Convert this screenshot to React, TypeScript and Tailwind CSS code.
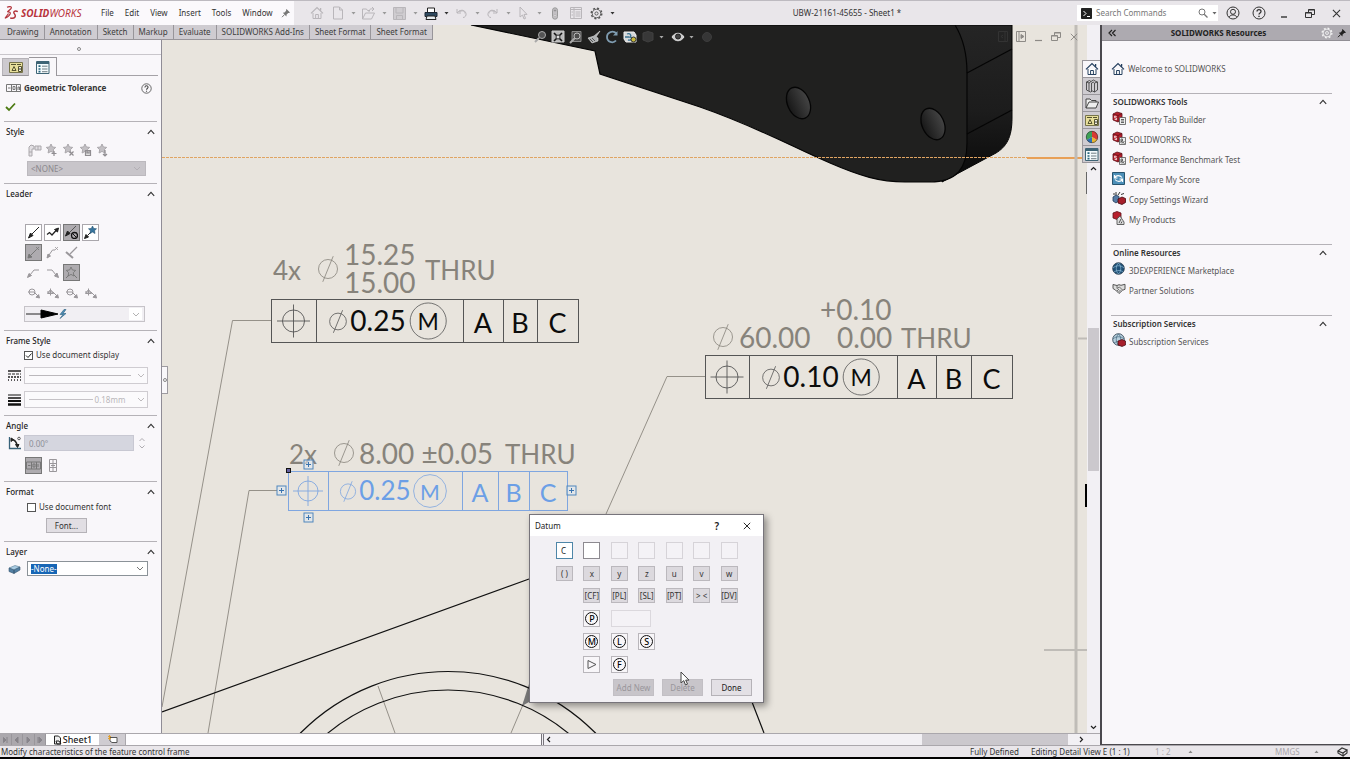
import React from "react";

type Kids = { children?: React.ReactNode };

const Svg = ({ w = 14, h = 14, vb, children, className = "" }: Kids & { w?: number; h?: number; vb?: string; className?: string }) => (
  <svg width={w} height={h} viewBox={vb ?? `0 0 ${w} ${h}`} fill="none" stroke="currentColor" strokeWidth="1" className={`shrink-0 ${className}`} aria-hidden="true">
    {children}
  </svg>
);

const Caret = ({ className = "" }: { className?: string }) => (
  <Svg w={5} h={3} className={className}>
    <path d="M0.5 0h4L2.5 2.6z" fill="currentColor" stroke="none" />
  </Svg>
);

const ChevronUp = () => (
  <Svg w={8} h={6} className="text-[#333]">
    <path d="M0.8 4.8L4 1.4l3.2 3.4" strokeWidth="1.1" />
  </Svg>
);

const ChevronDown = ({ className = "" }: { className?: string }) => (
  <Svg w={8} h={5} className={className}>
    <path d="M1 1l3 3 3-3" strokeWidth="0.9" />
  </Svg>
);

const HouseIcon = ({ className = "", fill = "#fff" }: { className?: string; fill?: string }) => (
  <Svg w={14} h={14} className={className}>
    <path d="M3 7v5.5h8V7" fill={fill} />
    <path d="M1 7.4L7 1.6l6 5.8M10.6 2v2.6" strokeWidth="1.3" />
    <path d="M5.6 12.5V8.5h2.8v4" />
  </Svg>
);

const GearIcon = ({ size = 13 }: { size?: number }) => (
  <Svg w={size} h={size} vb="0 0 14 14">
    <circle cx="7" cy="7" r="4.6" />
    <circle cx="7" cy="7" r="5.7" strokeWidth="1.5" strokeDasharray="2.2 2.27" />
    <circle cx="7" cy="7" r="1.7" />
  </Svg>
);

const PinIcon = () => (
  <Svg w={10} h={10}>
    <path d="M5.5 1l3.5 3.5-1 .6-.8-.2L5.6 6.6 5.4 8.4 1.8 4.8l1.7-.3L5.2 2.8 5 2z" fill="currentColor" stroke="none" />
    <path d="M3.6 6.5L1 9.2" />
  </Svg>
);

const Restore = () => (
  <Svg w={12} h={11}>
    <path d="M4.5 4V1.5h6v5H8" />
    <path d="M1.5 4.5h6v5h-6z" />
    <path d="M4.5 2h6M1.5 5h6" />
  </Svg>
);

const Cross = ({ size = 9 }: { size?: number }) => (
  <Svg w={size} h={size} vb="0 0 10 10">
    <path d="M1 1l8 8M9 1l-8 8" strokeWidth="1.2" />
  </Svg>
);

const DrawingIcon = () => (
  <Svg w={14} h={13}>
    <path d="M.5 1.5h13v10H.5z" fill="#e8df9a" stroke="#77744a" />
    <path d="M2 3.5h5M3 9.5l2-4 2 4zM8 3.5h4" stroke="#54522f" />
    <path d="M9.5 5.5h3v5h-3z" fill="#f4f1e0" stroke="#54522f" />
    <path d="M11 7v2" stroke="#333" />
  </Svg>
);

const ListIcon = () => (
  <Svg w={14} h={13}>
    <path d="M.5.5h12.5v12H.5z" fill="#f4fafc" stroke="#3e6475" />
    <path d="M1 2h12" stroke="#3e6475" strokeWidth="2" />
    <path d="M2.5 5.2h2M2.5 8h2M2.5 10.7h2" stroke="#27657e" strokeWidth="1.7" />
    <path d="M6 5.2h5.5M6 8h5.5M6 10.7h5.5" stroke="#6f7c82" />
  </Svg>
);

function TitleBar() {
  const menus = ["File", "Edit", "View", "Insert", "Tools", "Window"];
  return (
    <header className="flex h-[25px] shrink-0 items-stretch border-t border-[#bdbac0] bg-[#e9e6ea] text-[#333]">
      <div className="flex w-[294px] items-center bg-[#fbf9fc]">
        <Svg w={15} h={14} className="ml-1 text-[#b3343c]">
          <path d="M3 1.2C6 0 8.8.6 6.6 3L3.3 6M3.3 6C8 5.3 7 9.5 1 12.3L4.5 7.5" strokeWidth="1.2" />
          <path d="M13.8 5.6C11 4.2 8.7 5.6 10.3 7.7C12.5 10.5 11 13 6.2 12" strokeWidth="1.4" />
        </Svg>
        <span className="ml-[2px] w-[76px] text-[10px] italic text-[#b8343c]">
          <b>SOLID</b>WORKS
        </span>
        <nav className="ml-1 flex items-center gap-[11px]">
          {menus.map((m) => (
            <button key={m} type="button">{m}</button>
          ))}
        </nav>
        <button type="button" aria-label="Pin menu" className="ml-2 text-[#777]"><PinIcon /></button>
      </div>
      <div className="ml-3 flex items-center text-[#b9b6ba]">
        <Tool label="Home"><HouseIcon fill="none" /></Tool>
        <Tool label="New" caret><Svg w={12} h={14}><path d="M1.5 1h6l3 3v9h-9zM7.5 1v3h3" /></Svg></Tool>
        <Tool label="Open" caret><Svg w={15} h={13}><path d="M1.5 12V2h4l1 1.5H9M1.5 12l3-6h9l-3 6zM8 5c0-3 2-3.5 4-3M11 0l2 2-2 2" /></Svg></Tool>
        <Tool label="Save" caret><Svg w={13} h={13}><path d="M.5.5h12v12H.5z" fill="#cfccd0" /><path d="M3 1v5h7V1M3.5 12.5v-4h6v4" /></Svg></Tool>
        <Tool label="Print" caret dark>
          <Svg w={14} h={13}>
            <path d="M3.5 5V1h7v4" fill="#fff" stroke="#222" />
            <path d="M1 5.5h12v4H1z" fill="#2f4a61" stroke="#1c2733" />
            <path d="M3 9h8l1 3.5H2z" fill="#e8eef2" stroke="#222" />
          </Svg>
        </Tool>
        <Tool label="Undo" caret><Svg w={13} h={12}><path d="M2 2v4h4M2 6c3-4 8-3.5 9 .5.5 2-1 4-3 4M4.5 3.5V4.5H5.5C7.5 3 10 4 10 6.5" /></Svg></Tool>
        <Tool label="Redo" caret><Svg w={13} h={12}><path d="M11 2v4H7M11 6C8 2 3 2.5 2 6.5c-.5 2 1 4 3 4M8.5 3.5V4.5H7.5C5.5 3 3 4 3 6.5" /></Svg></Tool>
        <Tool label="Select" caret><Svg w={11} h={14}><path d="M2 1v10l2.5-2 1.5 4 1.5-.6-1.5-4H9z" /></Svg></Tool>
        <Tool label="Rebuild"><Svg w={8} h={13}><rect x="1.5" y=".8" width="5" height="11.4" rx="2.5" fill="#c4c1c5" stroke="#999" /><circle cx="4" cy="3.5" r="1.2" fill="#888" /><circle cx="4" cy="8.5" r="1.2" fill="#ddd" /></Svg></Tool>
        <Tool label="File Properties"><Svg w={12} h={12}><path d="M.5.5h11v11H.5zM.5 2.5h11M4 .5v11M1.5 5h1.5M1.5 8h1.5M5.5 5h5M5.5 7h5M5.5 9h5" /></Svg></Tool>
        <Tool label="Options" caret dark><span className="text-[#555]"><GearIcon /></span></Tool>
      </div>
      <div className="flex flex-1 items-center justify-center whitespace-nowrap">UBW-21161-45655 - Sheet1 *</div>
      <label className="my-[4px] flex w-[141px] items-center bg-white">
        <Svg w={11} h={11} className="ml-[4px]">
          <path d="M.5.5h10v10H.5z" fill="#222" stroke="#222" />
          <path d="M2.5 3l2.5 2.5L2.5 8M6 8.5h3" stroke="#fff" />
        </Svg>
        <input aria-label="Search Commands" placeholder="Search Commands" className="ml-1 w-[102px] bg-transparent outline-none placeholder:text-[#777]" />
        <Svg w={10} h={10} className="text-[#777]"><circle cx="4" cy="4" r="3" /><path d="M6.2 6.2L9.5 9.5" strokeWidth="1.3" /></Svg>
        <Caret className="ml-[4px] text-[#666]" />
      </label>
      <div className="flex items-center text-[#333]">
        <button type="button" aria-label="Account" className="flex w-[30px] justify-center"><Svg w={14} h={14}><circle cx="7" cy="7" r="6" /><circle cx="7" cy="5.8" r="2.5" /><path d="M3.2 11.2c1-3 6.5-3 7.6 0" /></Svg></button>
        <button type="button" aria-label="Help" className="flex w-[22px] justify-center"><HelpMark size={14} /></button>
        <button type="button" aria-label="Minimize" className="flex w-[28px] justify-center pt-[7px]"><Svg w={8} h={2}><path d="M1 1h6" strokeWidth="1.4" /></Svg></button>
        <button type="button" aria-label="Restore" className="flex w-6 justify-center"><Restore /></button>
        <button type="button" aria-label="Close" className="flex w-[28px] justify-center"><Cross /></button>
      </div>
    </header>
  );
}

const HelpMark = ({ size = 11 }: { size?: number }) => (
  <Svg w={size} h={size} vb="0 0 14 14">
    <circle cx="7" cy="7" r="6" />
    <path d="M5 5.6C5 3 9 3 9 5.5 9 7 7 7 7 8.6" strokeWidth="1.3" />
    <path d="M7 9.8v1.3" strokeWidth="1.4" />
  </Svg>
);

const Tool = ({ label, caret, dark, children }: Kids & { label: string; caret?: boolean; dark?: boolean }) => (
  <button type="button" aria-label={label} className="flex items-center">
    <span className="flex w-[21px] justify-center">{children}</span>
    {caret && <span className="flex w-[10px] justify-center"><Caret className={dark ? "text-[#333]" : "text-[#999]"} /></span>}
  </button>
);

function CommandTabs() {
  const tabs = ["Drawing", "Annotation", "Sketch", "Markup", "Evaluate", "SOLIDWORKS Add-Ins", "Sheet Format", "Sheet Format"];
  return (
    <div className="absolute left-0 top-0 z-10 flex h-[15px] border-b border-[#99969b] bg-[#cfccd1] pl-[2px] text-[#3d3d3d]">
      {tabs.map((t, i) => (
        <button key={i} type="button" className="whitespace-nowrap border-r border-[#98959a] px-[5px]">{t}</button>
      ))}
    </div>
  );
}

const Section = ({ title, children }: Kids & { title: string }) => (
  <section className="mx-1 border-t border-[#b5b2b7]">
    <h3 className="flex h-[19px] items-center justify-between pl-[2px] pr-[2px] font-medium text-[#222]">
      {title}
      <button type="button" aria-label={`Collapse ${title}`}><ChevronUp /></button>
    </h3>
    {children}
  </section>
);

const IconButton = ({ label, on, framed, children }: Kids & { label: string; on?: boolean; framed?: boolean }) => (
  <button
    type="button"
    aria-label={label}
    className={`flex size-[17px] items-center justify-center ${on ? "border border-[#777] bg-[#aeabaf] text-[#555]" : framed ? "border border-[#aaa7ac] bg-white text-[#222]" : "text-[#9a979b]"}`}
  >
    {children}
  </button>
);

const star = "M6 1l1.4 3 3.3.4-2.4 2.3.6 3.3L6 8.4 3.1 10l.6-3.3L1.3 4.4 4.6 4z";

function PropertyManager() {
  return (
    <aside className="flex w-[162px] shrink-0 flex-col border-r border-[#8f8c96] bg-[#f9f7fa] pt-[15px]">
      <div className="flex h-[15px] items-center justify-center border-b border-[#c9c6cb] pr-[3px]">
        <span className="mt-[3px] size-1 rounded-full border border-[#888]" />
      </div>
      <div className="mt-[2px] flex h-[19px] items-end pl-[2px]">
        <button type="button" aria-label="Feature tree" className="flex h-[18px] w-[27px] items-center justify-center border border-b-[#99969b] border-[#b5b2b7] bg-[#cdcacf]"><DrawingIcon /></button>
        <button type="button" aria-label="Properties" className="flex h-[19px] w-7 items-center justify-center border-r border-t border-[#99969b] bg-[#f9f7fa]"><ListIcon /></button>
        <span className="mr-[3px] h-px flex-1 bg-[#a5a2a7]" />
      </div>
      <div className="mt-1 flex h-4 items-center pl-[6px] pr-[9px]">
        <Svg w={15} h={8} className="text-[#777]"><path d="M.5.5h14v7H.5zM5.5 1v6M10.5 1v6M2 4h2.5M7 2.5h2v3H7zM12 6V3h1.5v3" /></Svg>
        <h2 className="ml-[3px] flex-1 whitespace-nowrap font-bold text-[#333]">Geometric Tolerance</h2>
        <button type="button" aria-label="Help" className="text-[#444]"><HelpMark /></button>
      </div>
      <button type="button" aria-label="OK" className="mb-[9px] ml-[5px] mt-[5px] self-start">
        <Svg w={11} h={11}><path d="M1 6l3 3 6-6.5" stroke="#4c7a12" strokeWidth="1.8" /></Svg>
      </button>

      <Section title="Style">
        <div className="ml-[23px] mt-px flex h-4 items-center gap-[3px] text-[#aba8ac]">
          <button type="button" aria-label="Apply defaults"><Svg w={15} h={14}><path d="M2 13V4l2-2 3 1v3H5v7zM8 3h6v4H8zM11 3v4M2 9h3" fill="#e2dfe3" /></Svg></button>
          {["M9 8v5M6.5 10.5h5", "M7.5 8.5l4 4M11.5 8.5l-4 4", "M6.5 7.5h5v5h-5zM8 8v2h2v-2", "M9 7v6M7 11l2 2 2-2"].map((d, i) => (
            <button key={i} type="button" aria-label={["Add style", "Delete style", "Save style", "Load style"][i]}>
              <Svg w={14} h={14}><path d={star} fill="#c3c0c4" /><path d={d} stroke="#908d91" strokeWidth="1.2" fill={i === 2 ? "#ddd" : "none"} /></Svg>
            </button>
          ))}
        </div>
        <div className="mb-[7px] ml-[23px] mr-[11px] mt-[3px] flex h-[15px] items-center border border-[#bcb9be] bg-[#c8c5ca] pl-[3px] pr-1 text-[#8b888d]">
          <select aria-label="Style" disabled className="flex-1 appearance-none opacity-100"><option>&lt;NONE&gt;</option></select>
          <ChevronDown className="text-[#b0adb2]" />
        </div>
      </Section>

      <Section title="Leader">
        <div className="ml-[21px] mt-[21px] flex flex-col gap-[3px]">
          <div className="flex gap-[2px]">
            <IconButton label="Leader" framed><Svg w={13} h={13}><path d="M12 1L5 8" /><path d="M1.5 12l2-5 2.5 2.5z" fill="currentColor" /></Svg></IconButton>
            <IconButton label="Multi-jog leader" framed><Svg w={13} h={13}><path d="M1 8.5l2.5-2 2.5 2.5 4.5-5" strokeWidth="1.3" /><path d="M12.5 2l-1 4-3-2.5z" fill="currentColor" /></Svg></IconButton>
            <IconButton label="No leader" on><Svg w={13} h={13}><path d="M11 0L4 7" stroke="#555" /><path d="M.5 10l2-5L5 7.5z" fill="#222" stroke="#222" /><circle cx="9.5" cy="9.5" r="3" stroke="#111" strokeWidth="1.3" /><path d="M7.5 7.5l4 4" stroke="#111" /></Svg></IconButton>
            <IconButton label="Auto leader" framed><Svg w={13} h={13}><path d="M7.5 5.5L3.5 9.5" /><path d="M.5 12.5l1.5-4 2.5 2.5z" fill="currentColor" /><path d="M8.5 0l1.2 2.5 2.8.3-2 1.9.5 2.8-2.5-1.4L6 7.5l.5-2.8-2-1.9 2.8-.3z" fill="#36749c" stroke="#1f4d6e" strokeWidth=".6" /></Svg></IconButton>
          </div>
          <div className="flex gap-[2px]">
            <IconButton label="Straight leader" on><Svg w={13} h={13}><path d="M9 4L3 10" stroke="#777" /><path d="M1 12l1-4 3 3z" fill="#777" stroke="#777" /><path d="M9 1l3 3M12 1L9 4" strokeWidth=".8" stroke="#777" /></Svg></IconButton>
            <IconButton label="Bent leader"><Svg w={13} h={13}><path d="M3 9l3.5-5H9" /><path d="M1 12l1-4 2.5 2z" fill="currentColor" /><path d="M9 1l3 3M12 1L9 4" strokeWidth=".8" /></Svg></IconButton>
            <IconButton label="Perpendicular leader"><Svg w={13} h={13}><path d="M12 1L5 8" strokeWidth="1.3" /><path d="M1 6l7 6" strokeWidth="2" /></Svg></IconButton>
          </div>
          <div className="flex gap-[2px]">
            <IconButton label="Leader left"><Svg w={13} h={11}><path d="M3 8l4-5h5" /><path d="M.5 10.5l1.5-4 2.5 2z" fill="currentColor" /></Svg></IconButton>
            <IconButton label="Leader right"><Svg w={13} h={11}><path d="M1 3h5l4 5" /><path d="M12.5 10.5l-4-1.5 2.5-3z" fill="currentColor" /></Svg></IconButton>
            <IconButton label="Leader nearest" on><Svg w={13} h={13}><path d="M4 9l-3 3M9 9l3 3" stroke="#777" /><path d={star} strokeWidth=".9" stroke="#777" /></Svg></IconButton>
          </div>
          <div className="flex gap-[2px]">
            {["All around", "All over", "All around this side", "Between"].map((l, i) => (
              <IconButton key={l} label={l}>
                <Svg w={13} h={12}>
                  {i % 2 === 0 ? <circle cx="5" cy="5" r="3" /> : <path d="M4.5 1.5v7M1.5 6.5l3-4 3 4z" />}
                  <path d="M1 5h6l4 4" />
                  <path d="M12.5 11l-3.5-.8 2.6-2.6z" fill="currentColor" />
                </Svg>
              </IconButton>
            ))}
          </div>
        </div>
        <button type="button" aria-label="Arrow style" className="mb-2 ml-5 mt-[5px] flex h-4 w-[121px] items-center justify-between border border-[#c6c3c8] bg-[#f1eff3] pr-[2px]">
          <Svg w={42} h={12}>
            <path d="M1 6h17" stroke="#222" />
            <path d="M16 2l17 4-17 4z" fill="#000" stroke="#000" />
            <path d="M39 1.5l-4 5h3l-3 4 6-5h-3l3-4z" fill="#4d8db5" stroke="#2c5f80" strokeWidth=".6" />
          </Svg>
          <span className="flex h-3 w-[13px] items-center justify-center bg-white"><ChevronDown className="text-[#aaa]" /></span>
        </button>
      </Section>

      <Section title="Frame Style">
        <label className="ml-5 flex h-[10px] items-center gap-[3px] text-[#333]">
          <CheckBox checked />Use document display
        </label>
        <div className="mt-[7px] flex items-center pl-1">
          <Svg w={13} h={11} className="text-[#222]"><path d="M0 1h13" strokeWidth="1.5" /><path d="M0 4h13" strokeDasharray="3 1" /><path d="M0 7h13" strokeDasharray="2 1" strokeWidth="1.5" /><path d="M0 10h13" strokeDasharray="1 2" strokeWidth="1.5" /></Svg>
          <button type="button" aria-label="Line style" className="ml-[3px] flex h-[17px] w-[124px] items-center justify-between border border-[#cfccd1] bg-[#fbfafc] pl-1 pr-[2px]">
            <span className="h-px w-[102px] bg-[#bbb8bc]" /><ChevronDown className="text-[#b5b2b6]" />
          </button>
        </div>
        <div className="mb-[7px] mt-[7px] flex items-center pl-1">
          <Svg w={13} h={12} className="text-[#111]"><path d="M0 1h13" /><path d="M0 4h13" strokeWidth="1.5" /><path d="M0 7h13" strokeWidth="2" /><path d="M0 10.5h13" strokeWidth="2.5" /></Svg>
          <button type="button" aria-label="Line thickness" className="ml-[3px] flex h-[17px] w-[124px] items-center justify-between border border-[#cfccd1] bg-[#fbfafc] pl-1 pr-[2px] text-[#b9b6ba]">
            <span className="h-px w-[64px] bg-[#c5c2c6]" /><span className="mr-[10px]">0.18mm</span><ChevronDown className="text-[#b5b2b6]" />
          </button>
        </div>
      </Section>

      <Section title="Angle">
        <div className="flex items-center pl-1">
          <Svg w={13} h={14} className="text-[#222]"><path d="M1.5 1v11.5H13" stroke="#38627a" strokeWidth="1.3" /><path d="M3.5 3.5c3 .2 5 2.5 5.5 6" strokeWidth="1.5" /><path d="M9.5 11.5l-2-3h3.5zM3 2l2.5 1.5L3 5.5z" fill="currentColor" /><circle cx="11" cy="2.5" r="1.3" strokeWidth=".7" /></Svg>
          <input aria-label="Angle" disabled defaultValue="0.00°" className="ml-[3px] h-4 w-[110px] border border-[#c8c8d2] bg-[#d5d6df] px-1 text-[#8d8f98]" />
          <Svg w={8} h={14} className="ml-1 text-[#b0adb2]"><path d="M1.5 5L4 2.5 6.5 5M1.5 9.5L4 12l2.5-2.5" /></Svg>
        </div>
        <div className="mb-[7px] ml-[21px] mt-[6px] flex gap-[2px]">
          <IconButton label="Horizontal" on><Svg w={15} h={9}><path stroke="#777" d="M.5 1h14v7H.5zM5.5 1v7M10.5 1v7M2 4.5h2.5M7 3h2v3H7zM12 3v3" /></Svg></IconButton>
          <IconButton label="Vertical"><Svg w={8} h={13}><path d="M.5.5h7v12h-7zM.5 4.5h7M.5 8.5h7M4 1v11M2 6.5h4" /></Svg></IconButton>
        </div>
      </Section>

      <Section title="Format">
        <label className="ml-[23px] mt-px flex h-[10px] items-center gap-[3px] text-[#333]">
          <CheckBox />Use document font
        </label>
        <button type="button" className="mb-2 ml-[42px] mt-[6px] flex h-[15px] w-[41px] items-center justify-center border border-[#b5b2b7] bg-[#e1dee3] text-[#333]">Font...</button>
      </Section>

      <Section title="Layer">
        <div className="flex items-center pl-1">
          <Svg w={13} h={10}><path d="M1 4l6-2.5 5 1.5-6 3z" fill="#a9cbe2" stroke="#557a94" strokeWidth=".6" /><path d="M1 4l5 2v3.5l-5-2zM6 6l6-3v3L6 9.5z" fill="#527fa3" stroke="#35566e" strokeWidth=".6" /></Svg>
          <div className="ml-[6px] flex h-[15px] w-[121px] items-center border border-[#8b9298] bg-white px-[3px]">
            <button type="button" className="bg-[#1766b5] leading-[10px] text-white">-None-</button>
            <ChevronDown className="ml-auto text-[#666]" />
          </div>
        </div>
      </Section>
    </aside>
  );
}

const CheckBox = ({ checked = false }: { checked?: boolean }) => (
  <span className="relative flex size-[9px]">
    <input type="checkbox" defaultChecked={checked} className="peer size-[9px] appearance-none border border-[#555] bg-white" />
    <Svg w={9} h={9} className="pointer-events-none absolute inset-0 hidden text-[#222] peer-checked:block"><path d="M2 4.5l2 2 3.5-4" /></Svg>
  </span>
);

const Plus = ({ x, y }: { x: number; y: number }) => (
  <g stroke="#4f86bd" fill="#dfe8f0" fillOpacity="0.6">
    <rect x={x - 4.5} y={y - 4.5} width="9" height="9" />
    <path d={`M${x - 2.5} ${y}h5M${x} ${y - 2.5}v5`} stroke="#3a74b0" />
  </g>
);

const Diameter = ({ x, y, r, s }: { x: number; y: number; r: number; s: string }) => (
  <g fill="none" stroke={s} strokeWidth="0.8">
    <circle cx={x} cy={y} r={r} />
    <path d={`M${x - r * 0.55} ${y + r * 1.35}L${x + r * 0.55} ${y - r * 1.35}`} />
  </g>
);

type FrameProps = { x: number; y: number; cols: number[]; h: number; value: string; size: number; ink: string; line: string };

function ControlFrame({ x, y, cols, h, value, size, ink, line }: FrameProps) {
  const right = cols[cols.length - 1];
  const mid = y + h / 2;
  const cx = (x + cols[0]) / 2;
  const r = h / 4;
  const mx = cols[0] + h * 2.55;
  const base = mid + size * 0.38;
  return (
    <g fontSize={size} fill={ink} stroke="none">
      <g fill="none" stroke={line}>
        <rect x={x + 0.5} y={y + 0.5} width={right - x} height={h - 1} />
        {cols.slice(0, -1).map((c) => <path key={c} d={`M${c + 0.5} ${y}v${h}`} />)}
        <circle cx={cx} cy={mid} r={r} strokeWidth="0.9" />
        <path d={`M${cx - r * 1.5} ${mid}h${r * 3}M${cx} ${mid - r * 1.5}v${r * 3}`} strokeWidth="0.9" />
        <circle cx={mx} cy={mid} r={h * 0.41} strokeWidth="0.8" />
      </g>
      <Diameter x={cols[0] + h * 0.5} y={mid + 0.5} r={h * 0.19} s={line} />
      <text x={cols[0] + h * 0.78} y={base - 1}>{value}</text>
      <text x={mx} y={mid + size * 0.33} textAnchor="middle" fontSize={size * 0.82}>M</text>
      {["A", "B", "C"].map((l, i) => (
        <text key={l} x={(cols[i + 1] + cols[i + 2]) / 2} y={base + 1} textAnchor="middle" fontSize={size - 1}>{l}</text>
      ))}
    </g>
  );
}

function Drawing() {
  const dim = "#87837b";
  return (
    <svg className="absolute inset-0 h-full w-full" viewBox="162 25 925 708" preserveAspectRatio="xMidYMid slice" fontFamily="Lato, sans-serif" fill="none">
      <defs>
        <linearGradient id="side" x1="0" y1="0" x2="0" y2="1">
          <stop offset="0" stopColor="#252525" />
          <stop offset="0.55" stopColor="#1c1c1c" />
          <stop offset="1" stopColor="#090909" />
        </linearGradient>
        <linearGradient id="hole" x1="0" y1="0" x2="1" y2="0">
          <stop offset="0" stopColor="#181818" />
          <stop offset="1" stopColor="#444" />
        </linearGradient>
      </defs>
      <path d="M942 25H1012V118C1012 138 1006 147 996 153L955 175L942 182Z" fill="url(#side)" stroke="#050505" />
      <path d="M471 25L595 51L600 74L700 107C760 128 790 146 830 163C860 176 880 182 905 182H930C957 182 967 168 967 143V73C967 53 963 38 955 25Z" fill="#20201f" stroke="#050505" strokeWidth="1.2" />
      <path d="M967 73L1012 49M967 134L1012 110" stroke="#050505" strokeWidth="1.2" />
      <ellipse cx="798.5" cy="103" rx="11" ry="16.5" transform="rotate(-24 798.5 103)" fill="url(#hole)" stroke="#050505" strokeWidth="1.3" />
      <ellipse cx="933" cy="124" rx="11" ry="16.5" transform="rotate(-24 933 124)" fill="url(#hole)" stroke="#050505" strokeWidth="1.3" />
      <path d="M162 157.5H1027" stroke="#e0a462" strokeDasharray="3 1" strokeWidth="1" />
      <path d="M1027 158H1082" stroke="#e88a28" strokeWidth="1.6" />

      <path d="M1076 25V733" stroke="#bfbcb7" strokeWidth="3" />
      <path d="M1078 338.5H1087M1044 650H1087" stroke="#bfbcb7" strokeWidth="2" />
      <path d="M1086.5 172V194" stroke="#666" />
      <path d="M1086 484V507" stroke="#000" strokeWidth="2" />

      <g stroke="#8b877f" strokeWidth="0.9">
        <path d="M271 320.5H232.5L162 707" />
        <path d="M277 490.5H249L208 733" />
        <path d="M705 376.5H667L606 514" />
        <path d="M378 686L395 733M525 700L511 733" />
      </g>
      <path d="M529 684L522 706L529 702Z" fill="#777" />
      <g stroke="#111" strokeWidth="1.2">
        <path d="M162 712L529 579M752 702L764 733" />
        <circle cx="448" cy="879" r="207.5" />
        <circle cx="448" cy="879" r="189" />
      </g>

      <g fontSize="28" fill={dim}>
        <text x="273" y="280" fontSize="26">4x</text>
        <text x="344" y="265">15.25</text>
        <text x="344" y="293">15.00</text>
        <text x="425" y="280" fontSize="26">THRU</text>
        <text x="289" y="464" fontSize="26">2x</text>
        <text x="359" y="464">8.00 ±0.05</text>
        <text x="505" y="464" fontSize="26">THRU</text>
        <text x="820" y="320">+0.10</text>
        <text x="739" y="348">60.00</text>
        <text x="837" y="348">0.00</text>
        <text x="901" y="348" fontSize="26">THRU</text>
      </g>
      <Diameter x={328} y={269} r={9.5} s={dim} />
      <Diameter x={344} y={453} r={9.5} s={dim} />
      <Diameter x={723} y={337} r={9.5} s={dim} />

      <ControlFrame x={271} y={299} cols={[316, 463, 503, 537, 578]} h={44} value="0.25" size={28} ink="#0c0c0c" line="#555" />
      <ControlFrame x={705} y={355} cols={[749, 897, 936, 971, 1012]} h={44} value="0.10" size={28} ink="#0c0c0c" line="#555" />
      <ControlFrame x={288} y={471} cols={[328, 462, 498, 529, 567]} h={40} value="0.25" size={26} ink="#6c9fe6" line="#7fa6e0" />
      <Plus x={308.5} y={464.5} />
      <Plus x={308.5} y={517.5} />
      <Plus x={281.5} y={490.5} />
      <Plus x={571.5} y={490.5} />
      <rect x="286.5" y="468.5" width="4" height="4" fill="#6660a0" stroke="#111" />
    </svg>
  );
}

function ViewToolbar() {
  return (
    <div className="absolute left-[371px] top-[5px] flex items-center gap-1 text-[#a9a9a9]">
      <button type="button" aria-label="Zoom"><Svg><circle cx="9" cy="5" r="3.5" fill="#555" /><path d="M6 8l-4 4" strokeWidth="2" /></Svg></button>
      <button type="button" aria-label="Zoom to fit"><Svg><path d="M1 1h12v11H1z" fill="#b9b9b9" stroke="#ccc" /><path d="M3 3l8 8M11 3l-8 8" stroke="#111" strokeWidth="1.6" /><circle cx="7" cy="7" r="2" fill="#ddd" stroke="#333" /></Svg></button>
      <button type="button" aria-label="Zoom to area"><Svg><path d="M3 1.5h9v10H3z" fill="#4c4c4c" stroke="#888" /><circle cx="8" cy="6" r="3" stroke="#bbb" /><path d="M6 8l-5 5" strokeWidth="2" /></Svg></button>
      <button type="button" aria-label="Section view"><Svg><path d="M13 1L7 6 1 8l4 5 6-2V8l-2-1z" fill="#aeb1b3" stroke="#ddd" strokeWidth=".6" /><path d="M3 9l3 3M5 8l3 3" stroke="#555" /></Svg></button>
      <button type="button" aria-label="Rotate view"><Svg><path d="M11.5 3.5C8 0 2 2 2 7s6 7 9 3.5" stroke="#7f9cb0" strokeWidth="1.8" /><path d="M12.5 1v4.5H8" fill="#7f9cb0" stroke="none" /></Svg></button>
      <button type="button" aria-label="3D drawing view"><Svg><path d="M1 2h10l2 3v7H3L1 9z" fill="#d5d8da" stroke="#eee" /><path d="M4 4c3-1 5 1 3 3 3 0 2 4-2 3M2 7h4" stroke="#38708f" strokeWidth="1.3" /><circle cx="10.5" cy="9.5" r="2.5" fill="#c8b93a" stroke="#333" /></Svg></button>
      <button type="button" aria-label="Display style" className="flex items-center gap-1"><Svg><path d="M2 3l5-1.5L12 3v7l-5 2-5-2z" fill="#383838" stroke="#404040" /></Svg><Caret className="mr-[3px]" /></button>
      <button type="button" aria-label="Hide or show items" className="flex items-center gap-1"><Svg><path d="M1 7c3-5 9-5 12 0-3 5-9 5-12 0z" fill="#ccc" stroke="#ddd" /><circle cx="7" cy="6.5" r="2.5" fill="#444" stroke="#222" /></Svg><Caret className="mr-[3px]" /></button>
      <button type="button" aria-label="Appearance"><Svg><circle cx="6" cy="7" r="4.5" fill="#363636" stroke="#3c3c3c" /></Svg></button>
    </div>
  );
}

function LetterInCircle({ letter }: { letter: string }) {
  return (
    <button type="button" aria-label={`Modifier ${letter}`} className="flex size-[17px] items-center justify-center border border-[#b9b6bb] bg-[#f8f6f9]">
      <span className="flex size-[13px] items-center justify-center rounded-full border border-[#111] text-[9px] font-medium leading-none text-black">{letter}</span>
    </button>
  );
}

function DatumDialog() {
  const key = "flex h-[15px] w-[17px] items-center justify-center whitespace-nowrap border border-[#bbb8bd] bg-[#dcd9de] text-[#333]";
  return (
    <div role="dialog" aria-label="Datum" className="absolute left-[367px] top-[489px] w-[235px] border border-[#77747b] bg-[#f2f0f4] shadow-[3px_3px_7px_rgba(0,0,0,0.4)]">
      <div className="flex h-[21px] items-center bg-white pl-[5px] pr-3 text-[#222]">
        <h2 className="flex-1">Datum</h2>
        <button type="button" aria-label="Help" className="mr-6 text-[10px] font-semibold">?</button>
        <button type="button" aria-label="Close"><Cross size={8} /></button>
      </div>
      <div className="ml-[26px] mt-[6px] w-[192px]">
        <div className="flex flex-col gap-[7px]">
          <div className="grid grid-cols-7">
            <input aria-label="Datum 1" defaultValue="C" className="h-[17px] w-[17px] border border-[#4e86a8] bg-white pl-1 text-[#222]" />
            <input aria-label="Datum 2" className="h-[17px] w-[17px] border border-[#8d8a90] bg-white" />
            {[3, 4, 5, 6, 7].map((n) => <input key={n} aria-label={`Datum ${n}`} disabled className="h-[17px] w-[17px] border border-[#d6d3d8] bg-[#f4f2f6]" />)}
          </div>
          <div className="grid grid-cols-7">
            {["( )", "x", "y", "z", "u", "v", "w"].map((k) => <button key={k} type="button" className={key}>{k}</button>)}
          </div>
          <div className="grid grid-cols-7">
            <span />
            {["[CF]", "[PL]", "[SL]", "[PT]", "> <", "[DV]"].map((k) => <button key={k} type="button" className={key}>{k}</button>)}
          </div>
        </div>
        <div className="mt-[7px] flex flex-col gap-[6px]">
          <div className="grid grid-cols-7"><span /><LetterInCircle letter="P" /><input aria-label="Projected height" disabled className="h-[17px] w-10 border border-[#dbd8dd] bg-[#f4f2f6]" /></div>
          <div className="grid grid-cols-7"><span /><LetterInCircle letter="M" /><LetterInCircle letter="L" /><LetterInCircle letter="S" /></div>
          <div className="grid grid-cols-7">
            <span />
            <button type="button" aria-label="Translation" className="flex size-[17px] items-center justify-center border border-[#b9b6bb] bg-[#f8f6f9] text-[#555]"><Svg w={11} h={11}><path d="M2 1.5l8 4-8 4z" /></Svg></button>
            <LetterInCircle letter="F" />
          </div>
        </div>
      </div>
      <div className="mb-[6px] mr-[11px] mt-[6px] flex justify-end gap-2">
        <button type="button" disabled className="h-[17px] w-[41px] whitespace-nowrap border border-[#c2bfc4] bg-[#c8c5ca] text-[#99969b]">Add New</button>
        <button type="button" disabled className="h-[17px] w-[41px] border border-[#c2bfc4] bg-[#c8c5ca] text-[#99969b]">Delete</button>
        <button type="button" className="h-[17px] w-[41px] border border-[#b5b2b7] bg-[#e3e0e5] text-[#222]">Done</button>
      </div>
      <Svg w={10} h={15} className="absolute left-[150px] top-[156px]"><path d="M1 1v11l2.8-2.4L5.5 14l2-.9-1.8-4H9z" fill="#fff" stroke="#444" /></Svg>
    </div>
  );
}

function Canvas() {
  return (
    <main className="relative flex-1 overflow-hidden bg-[#e8e4dd]">
      <Drawing />
      <ViewToolbar />
      <div className="absolute right-[9px] top-[6px] flex items-center gap-2 text-[#8d8a86]">
        <button type="button" aria-label="Collapse left" className="text-[#333]"><Svg w={10} h={11}><path d="M.5.5h9v10h-9zM7 1v9M5 4L3 5.5 5 7" /></Svg></button>
        <button type="button" aria-label="Collapse right"><Svg w={10} h={11}><path d="M.5.5h9v10h-9zM3 1v9" /><path d="M5 3.5L8 5.5 5 7.5z" fill="currentColor" /></Svg></button>
        <button type="button" aria-label="Minimize document"><Svg w={8} h={10}><path d="M1 8.5h7" strokeWidth="1.2" /></Svg></button>
        <button type="button" aria-label="Restore document"><Restore /></button>
        <button type="button" aria-label="Close document"><Cross size={8} /></button>
      </div>
      <button type="button" aria-label="Hide panel" className="absolute left-0 top-[341px] flex h-7 w-[6px] items-center justify-center border border-l-0 border-[#9d9aa0] bg-[#f9f7fa]">
        <span className="size-[4px] rounded-full border border-[#888]" />
      </button>
      <DatumDialog />
    </main>
  );
}

function TaskTabs() {
  const icons = [
    <HouseIcon className="text-[#26405f]" />,
    <Svg className="text-[#444]"><path d="M1.5 3l3-1.5 1.5 1 2.5-1.5 1.5 1L12.5 3v8l-3 2-2-1-2 1-4-2zM4 4v8M6.5 4v8M9.5 4v9M1.5 3L4 4l2-1.5M6.5 4l2.5-1M9.5 4l3-1" strokeWidth=".9" /></Svg>,
    <Svg className="text-[#444]"><path d="M1 12V3h4l1.5 1.5H11V6M1 12l3-6h9.5L11 12z" fill="#eee" /></Svg>,
    <DrawingIcon />,
    <Svg><path d="M7 7V1a6 6 0 0 0-5.2 9z" fill="#3da256" stroke="none" /><path d="M7 7V1a6 6 0 0 1 5.2 9z" fill="#d83b35" stroke="none" /><path d="M7 7l5.2 3A6 6 0 0 1 7 13z" fill="#e8b631" stroke="none" /><path d="M7 7v6A6 6 0 0 1 1.8 10z" fill="#2d70b7" stroke="none" /><circle cx="7" cy="7" r="5.7" stroke="#333" strokeWidth=".6" /></Svg>,
    <ListIcon />,
  ];
  const labels = ["Resources", "Design Library", "File Explorer", "View Palette", "Appearances", "Custom Properties"];
  return (
    <div className="absolute right-0 top-[35px] z-10 flex w-[18px] flex-col border-l border-t border-[#99969b]">
      {icons.map((icon, i) => (
        <button key={i} type="button" aria-label={labels[i]} className={`flex h-[17px] items-center justify-center border-b border-[#99969b] ${i === 0 ? "bg-[#f9f7fa]" : "bg-[#cfccd1]"}`}>{icon}</button>
      ))}
    </div>
  );
}

function VerticalScroll() {
  return (
    <div className="flex w-[13px] shrink-0 flex-col items-center bg-[#f2f0f4] pt-[141px] text-[#222]">
      <Svg w={7} h={5}><path d="M1 4l2.5-2.5L6 4" strokeWidth="1.2" /></Svg>
      <div className="flex w-full flex-1 flex-col items-center">
        <div className="grow-[156]" />
        <div className="w-[11px] grow-[143] bg-[#cbc8cd]" />
        <div className="grow-[253]" />
      </div>
      <Svg w={7} h={5} className="mb-[3px]"><path d="M1 1l2.5 2.5L6 1" strokeWidth="1.2" /></Svg>
    </div>
  );
}

function SheetBar() {
  const arrows = ["M5 1v6M4 4L1.5 1.5v5z", "M5 1L2 4l3 3z", "M2 1l3 3-3 3z", "M2 1v6M3 1l3 3-3 3z"];
  return (
    <div className="flex h-3 shrink-0 items-stretch border-t border-[#aaa7ac] bg-[#f2f0f4] leading-[10px] text-[#222]">
      <div className="flex w-[46px] bg-[#aba8ad] text-[#87848a]">
        {arrows.map((d, i) => (
          <button key={i} type="button" aria-label={["First sheet", "Previous sheet", "Next sheet", "Last sheet"][i]} className="flex flex-1 items-center justify-center border-r border-[#99969b]"><Svg w={7} h={8}><path d={d} fill="currentColor" /></Svg></button>
        ))}
      </div>
      <button type="button" className="flex w-[53px] items-center justify-center gap-px bg-white text-[9px] font-medium"><Svg w={9} h={10}><path d="M1.5 1h4l2 2v6h-6zM3 6h3l2 3H4z" fill="#eee" /></Svg>Sheet1</button>
      <button type="button" aria-label="Add sheet" className="flex w-[27px] items-center justify-center border-r border-[#aaa7ac] bg-[#cfccd1]"><Svg w={11} h={9}><path d="M3 2.5h7v5H5L3 6z" fill="#fff" stroke="#555" /><path d="M1 1l3 3M4 1L1 4M2.5 0v5" stroke="#e0a030" /></Svg></button>
      <div className="w-[415px] bg-[#fdfcfe]" />
      <div className="w-[3px] border-x border-[#77747b]" />
      <button type="button" aria-label="Scroll left" className="px-[2px]"><Svg w={5} h={7}><path d="M4 1L1.5 3.5 4 6" strokeWidth="1.2" /></Svg></button>
      <div className="flex flex-1">
        <div className="grow-[368]" />
        <div className="grow-[146] bg-[#cbc8cd]" />
        <div className="grow-[11]" />
      </div>
      <button type="button" aria-label="Scroll right" className="pr-4"><Svg w={5} h={7}><path d="M1 1l2.5 2.5L1 6" strokeWidth="1.2" /></Svg></button>
    </div>
  );
}

const Cube = ({ badge }: { badge: string }) => (
  <Svg w={14} h={14}>
    <path d="M1 3l4-2 5 1.5v6L6 11 1 9z" fill="#b7202d" stroke="#5e1119" strokeWidth=".8" />
    <path d="M1 3l5 1.5 4-2M6 4.5V11" stroke="#5e1119" strokeWidth=".7" />
    <path d="M4.6 5.5l-2-.4v1.5l2 .6v1.500l-2-.5" stroke="#fff" strokeWidth=".8" />
    <path d="M7.5 6.5h6v7h-6z" fill="#eee" stroke="#555" strokeWidth=".8" />
    <path d={badge} stroke="#555" strokeWidth=".9" />
  </Svg>
);

const Globe = ({ cube }: { cube?: boolean }) => (
  <Svg w={14} h={14}>
    <circle cx="6.5" cy="6.5" r="5.8" fill={cube ? "#b8cfdd" : "#1f5077"} stroke="#1f3345" strokeWidth=".8" />
    <path d="M1 6c3-3 8-3 11 0M2 10c3-2 7-2 9 0M6.5 1c-3 3-3 8 0 11M6.5 1c3 3 3 8 0 11" stroke={cube ? "#456a80" : "#8db9d4"} strokeWidth=".7" />
    {cube && <path d="M6 8l4-1.5 3.5 1.5v4L10 13.5 6 12z" fill="#a71f2b" stroke="#41080e" strokeWidth=".7" />}
  </Svg>
);

function Resources() {
  const rx = "M9 8v4M9 8h1.5v2H9l3.5 2.5M12.5 10L10 12.5";
  const groups: { title: string; items: [string, React.ReactNode][] }[] = [
    {
      title: "SOLIDWORKS Tools",
      items: [
        ["Property Tab Builder", <Cube badge="M9 8.5h3M9 10h3M9 11.5h3" />],
        ["SOLIDWORKS Rx", <Cube badge={rx} />],
        ["Performance Benchmark Test", <Cube badge={rx} />],
        ["Compare My Score", <Svg w={13} h={13}><path d="M.5.5h12v12H.5z" fill="#4c8fb8" stroke="#28546f" /><path d="M3 5.5c1-2.5 5-2.5 7 0M10 7.5c-1 2.5-5 2.5-7 0M2.5 3v3h3M10.5 10V7h-3" stroke="#fff" strokeWidth="1.2" /></Svg>],
        ["Copy Settings Wizard", <Svg w={14} h={14}><path d="M1 6l3-2 3 1.5v4L4 12 1 10z" fill="#567ba5" stroke="#223a58" strokeWidth=".8" /><path d="M6 8l4-2 3.5 1.5v4L10 13.5 6 12z" fill="#a71f2b" stroke="#41080e" strokeWidth=".8" /><path d="M4 1v3M8 1L6 4M1 3h2M9 3.5l3-1" stroke="#333" /></Svg>],
        ["My Products", <Svg w={14} h={14}><path d="M1 2l4-1.5L9 2v5L5 8.5 1 7z" fill="#b7202d" stroke="#5e1119" strokeWidth=".8" /><path d="M5 13.5V8l3-3 4 6v2.5z" fill="#ddd" stroke="#555" strokeWidth=".9" /><path d="M7 12l2-4M9 12.5l1-2" stroke="#555" /></Svg>],
      ],
    },
    {
      title: "Online Resources",
      items: [
        ["3DEXPERIENCE Marketplace", <Globe />],
        ["Partner Solutions", <Svg w={14} h={12}><path d="M1 1.5l4 1 2-.8 2 .6 4-1v5l-2.5 1L7 10.5 3.5 7 1 5.5z" fill="#ddd" stroke="#555" /><path d="M5 2.5v3l2.5-1.5 3 3M5 8l2-2M6.5 9l2-2" stroke="#555" strokeWidth=".8" /></Svg>],
      ],
    },
    { title: "Subscription Services", items: [["Subscription Services", <Globe cube />]] },
  ];
  return (
    <aside className="flex w-[250px] shrink-0 flex-col border-b border-l-2 border-[#4b494e] bg-[#f9f7fa] text-[#555]">
      <div className="flex h-4 items-center border-b border-[#918e94] bg-[#adaab0] pl-[6px] pr-[3px] text-[#222]">
        <button type="button" aria-label="Collapse pane"><Svg w={8} h={8}><path d="M4 1L1 4l3 3M7.5 1l-3 3 3 3" strokeWidth="1.2" /></Svg></button>
        <h2 className="flex-1 text-center font-bold">SOLIDWORKS Resources</h2>
        <button type="button" aria-label="Options" className="mr-1 text-[#f4f4f4]"><GearIcon size={12} /></button>
        <button type="button" aria-label="Pin"><PinIcon /></button>
      </div>
      <div className="ml-[9px] mr-[18px]">
        <a href="#welcome" className="mb-[14px] mt-[18px] flex h-5 items-center gap-[3px]"><HouseIcon className="text-[#26405f]" />Welcome to SOLIDWORKS</a>
        {groups.map((g) => (
          <section key={g.title} className="border-t border-[#b5b2b7] pb-[14px]">
            <h3 className="flex h-4 items-center justify-between pl-[2px] pr-[5px] font-semibold text-[#333]">{g.title}<button type="button" aria-label={`Collapse ${g.title}`}><ChevronUp /></button></h3>
            {g.items.map(([label, icon]) => (
              <a key={label} href="#item" className="flex h-5 items-center gap-[3px] pl-px"><span className="flex w-[14px] pb-1">{icon}</span>{label}</a>
            ))}
          </section>
        ))}
      </div>
    </aside>
  );
}

export default function App() {
  return (
    <div className="flex h-screen flex-col overflow-hidden bg-[#e9e6ea] font-['Noto_Sans',sans-serif] text-[8px] leading-[12px]">
      <TitleBar />
      <div className="flex min-h-0 flex-1">
        <div className="relative flex min-w-0 flex-1 flex-col">
          <CommandTabs />
          <TaskTabs />
          <div className="flex min-h-0 flex-1">
            <PropertyManager />
            <Canvas />
            <VerticalScroll />
          </div>
          <SheetBar />
        </div>
        <Resources />
      </div>
      <footer className="flex h-[14px] shrink-0 items-center border-b-2 border-t border-b-black border-t-[#aaa7ac] pl-px pr-[2px] text-[#333]">
        <span className="flex-1">Modify characteristics of the feature control frame</span>
        <span className="w-[61px]">Fully Defined</span>
        <span className="w-[124px] whitespace-nowrap">Editing Detail View E (1 : 1)</span>
        <span className="w-[33px] text-[#aaa7ab]">1 : 2</span>
        <Caret className="mr-[82px] rotate-180 text-[#888]" />
        <span className="w-[39px] text-[#aaa7ab]">MMGS</span>
        <Caret className="mr-[18px] rotate-180 text-[#888]" />
        <Svg w={11} h={10}><path d="M1 4l4-3 5 2-4 3zM1 4v2l5 3V6M6 9l4-3V3" strokeWidth="1.1" /></Svg>
      </footer>
    </div>
  );
}
